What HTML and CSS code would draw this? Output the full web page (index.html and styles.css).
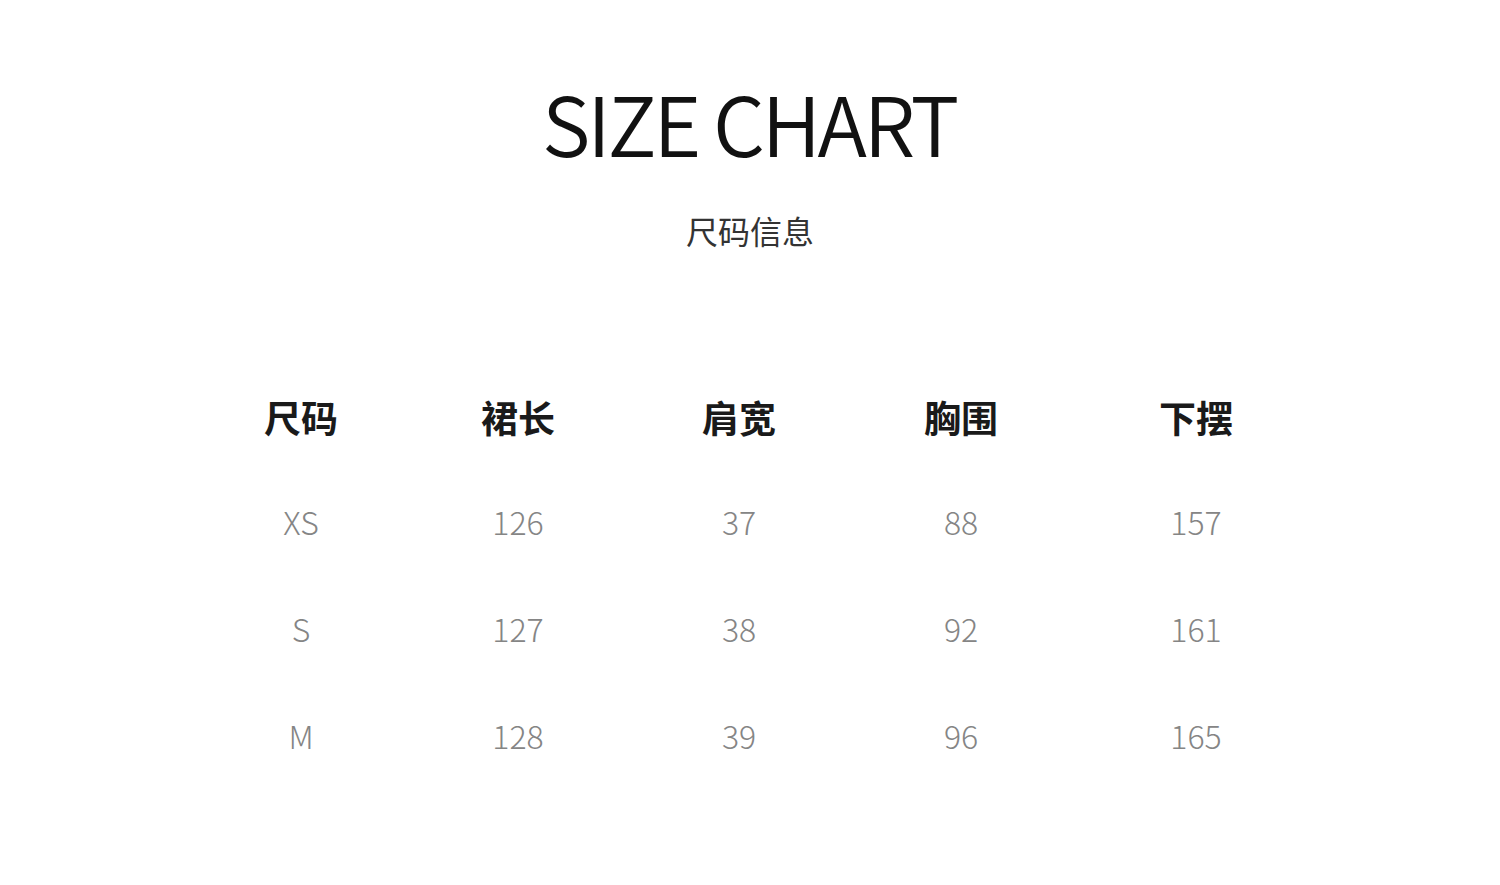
FILE: index.html
```html
<!DOCTYPE html>
<html lang="zh">
<head>
<meta charset="utf-8">
<link rel="stylesheet" href="styles.css">
</head>
<body>
<main class="page">
  <header class="heading">
    <h1 class="title">SIZE CHART</h1>
    <p class="subtitle">尺码信息</p>
  </header>
  <section class="chart">
    <div class="cell head">尺码</div>
    <div class="cell head">裙长</div>
    <div class="cell head">肩宽</div>
    <div class="cell head">胸围</div>
    <div class="cell head">下摆</div>

    <div class="cell">XS</div>
    <div class="cell">126</div>
    <div class="cell">37</div>
    <div class="cell">88</div>
    <div class="cell">157</div>

    <div class="cell">S</div>
    <div class="cell">127</div>
    <div class="cell">38</div>
    <div class="cell">92</div>
    <div class="cell">161</div>

    <div class="cell">M</div>
    <div class="cell">128</div>
    <div class="cell">39</div>
    <div class="cell">96</div>
    <div class="cell">165</div>
  </section>
</main>
</body>
</html>
```

FILE: styles.css
```css
html, body {
  margin: 0;
  padding: 0;
  background: #ffffff;
}
body {
  width: 1500px;
  height: 885px;
  overflow: hidden;
  font-family: "Noto Sans CJK SC", "Noto Sans", sans-serif;
}
.page {
  display: flex;
  flex-direction: column;
}
.heading {
  display: flex;
  flex-direction: column;
  align-items: center;
  padding-top: 62px;
}
.title {
  margin: 0;
  font-size: 82px;
  font-weight: 350;
  line-height: 120px;
  color: #111111;
  letter-spacing: -3.3px;
  margin-right: 2px;
}
.subtitle {
  margin: 0;
  margin-top: 23px;
  font-size: 32px;
  font-weight: 400;
  line-height: 50px;
  color: #333333;
}
.chart {
  display: grid;
  grid-template-columns: 216px 218px 224px 220px 250px;
  grid-template-rows: 100px 107px 107px 108px;
  margin-top: 112px;
  margin-left: 193px;
}
.cell {
  display: flex;
  align-items: center;
  justify-content: center;
  font-size: 32px;
  font-weight: 300;
  color: #858585;
}
.cell.head {
  font-size: 37px;
  font-weight: 700;
  color: #1a1a1a;
}
```
